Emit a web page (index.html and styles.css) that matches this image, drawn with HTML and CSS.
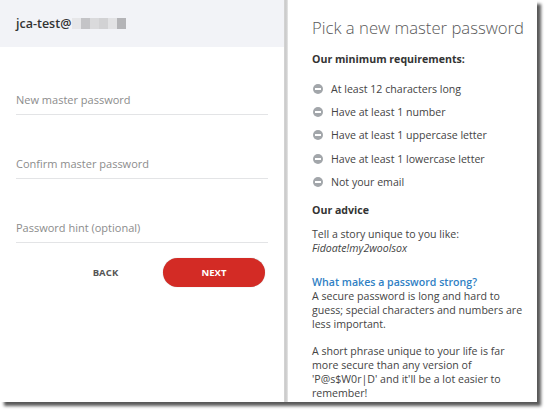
FILE: index.html
```html
<!DOCTYPE html>
<html>
<head>
<meta charset="utf-8">
<link rel="stylesheet" href="styles.css">
</head>
<body>
<div class="frame">
  <div class="left">
    <div class="header">
      <span class="email">jca-test@</span>
      <span class="blur">
        <i class="p1"></i><i class="p2"></i><i class="p3"></i><i class="p4"></i><i class="p5"></i><i class="p6"></i>
      </span>
    </div>
    <div class="form">
      <div class="field first">New master password</div>
      <div class="field">Confirm master password</div>
      <div class="field">Password hint (optional)</div>
      <div class="buttons">
        <div class="back">BACK</div>
        <div class="next">NEXT</div>
      </div>
    </div>
  </div>
  <div class="divider"></div>
  <div class="right">
    <h1 class="title">Pick a new master password</h1>
    <h2 class="sub">Our minimum requirements:</h2>
    <ul class="reqs">
      <li><span class="icon"></span>At least 12 characters long</li>
      <li><span class="icon"></span>Have at least 1 number</li>
      <li><span class="icon"></span>Have at least 1 uppercase letter</li>
      <li><span class="icon"></span>Have at least 1 lowercase letter</li>
      <li><span class="icon"></span>Not your email</li>
    </ul>
    <h2 class="sub advice">Our advice</h2>
    <p class="para tell">Tell a story unique to you like:<br><em>Fidoate!my2woolsox</em></p>
    <p class="para strong"><span class="link">What makes a password strong?</span><br>A secure password is long and hard to guess; special characters and numbers are less important.</p>
    <p class="para short">A short phrase unique to your life is far more secure than any version of 'P@s$W0r|D' and it'll be a lot easier to remember!</p>
  </div>
</div>
</body>
</html>
```
FILE: styles.css
```css
* { box-sizing: border-box; }
html, body { margin: 0; padding: 0; background: #ffffff; }
body { font-family: "Open Sans", "Liberation Sans", sans-serif; width: 550px; height: 415px; overflow: hidden; }

.frame {
  width: 537px;
  height: 402px;
  display: flex;
  background: #ffffff;
  box-shadow: 4px 4px 3px rgba(0,0,0,0.65);
}

.left { width: 284px; display: flex; flex-direction: column; }
.header {
  height: 47px;
  background: #f2f3f7;
  display: flex;
  align-items: center;
  padding-left: 16px;
  padding-bottom: 1px;
}
.email { font-size: 12.5px; font-weight: 600; color: #333; }
.blur { display: flex; height: 11px; margin-left: 1px; margin-top: 1px; }
.blur i { display: block; width: 9px; height: 11px; }
.blur .p1 { background: #e6e6e8; }
.blur .p2 { background: #c4c4c7; }
.blur .p3 { background: #dadadc; }
.blur .p4 { background: #d2d2d4; }
.blur .p5 { background: #e2e2e4; }
.blur .p6 { background: #b4b4b7; }

.form { padding: 0 16px; display: flex; flex-direction: column; }
.field {
  height: 64px;
  display: flex;
  align-items: flex-end;
  padding-bottom: 7px;
  border-bottom: 1px solid #e3e4e6;
  font-size: 11px;
  color: #8c8c8c;
}
.field.first { height: 68px; }
.buttons { display: flex; align-items: center; margin-top: 15px; }
.back {
  width: 115px;
  margin-left: 32px;
  text-align: center;
  font-size: 9.5px;
  font-weight: 700;
  color: #555;
  letter-spacing: 0.1px;
}
.next {
  width: 102px;
  height: 29px;
  border-radius: 15px;
  background: #d32b25;
  color: #fff;
  font-size: 9.5px;
  font-weight: 700;
  display: flex;
  align-items: center;
  justify-content: center;
  box-shadow: 0 0 1px rgba(0,0,0,0.3);
}

.divider {
  width: 4px;
  background: linear-gradient(to right, #d5d5d5, #c9c9c9 50%, #e8e8e8);
}

.right { flex: 1; padding: 16px 4px 0 24px; color: #444; }
.title { margin: 0; font-size: 16.7px; font-weight: 300; color: #595959; line-height: 24px; white-space: nowrap; }
.sub { margin: 12px 0 0; font-size: 10.6px; font-weight: 700; color: #333; line-height: 15px; }
.reqs { list-style: none; margin: 10px 0 0; padding: 0; }
.reqs li { display: flex; align-items: center; height: 23.3px; font-size: 10.6px; color: #444; }
.icon {
  width: 10px; height: 10px; border-radius: 50%;
  background: #a2a6aa;
  position: relative;
  margin: 0 8px 0 1px;
  flex-shrink: 0;
}
.icon::after {
  content: "";
  position: absolute;
  left: 2px; right: 2px; top: 4px; height: 2px;
  background: #fff;
}
.sub.advice { margin-top: 10px; }
.para { margin: 0; font-size: 10.6px; line-height: 14px; color: #444; }
.para em { font-style: italic; }
.tell { margin-top: 8.5px; }
.strong { margin-top: 20px; }
.link { color: #2f7fc4; font-weight: 600; }
.short { margin-top: 13px; }
```
